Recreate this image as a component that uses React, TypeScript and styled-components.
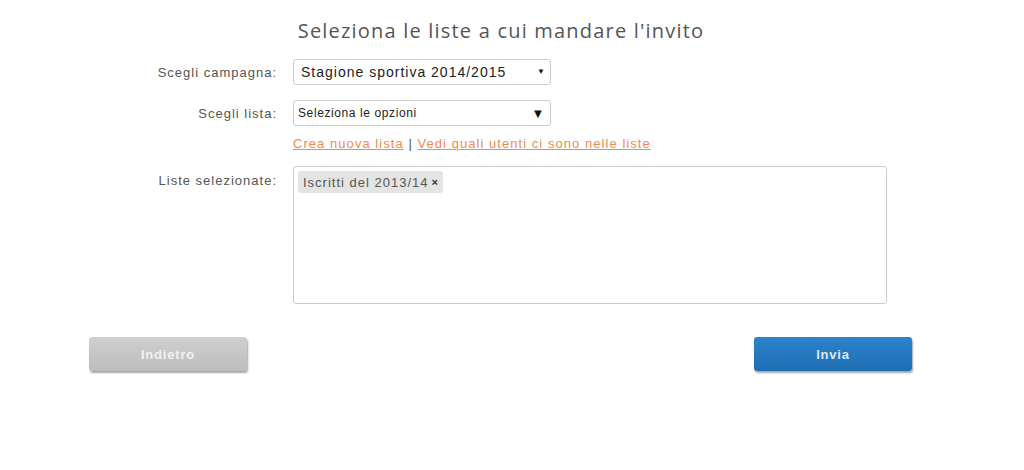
import React from "react";
import styled, { createGlobalStyle } from "styled-components";

const Global = createGlobalStyle`
  html, body { margin: 0; padding: 0; background: #fff; }
  body { font-family: "Liberation Sans", Arial, sans-serif; }
`;

const Page = styled.div`
  width: 1024px;
  height: 470px;
  box-sizing: border-box;
  padding-top: 16px;
`;

const Title = styled.h1`
  margin: 0 22px 0 0;
  text-align: center;
  font-family: "Open Sans", sans-serif;
  font-weight: 400;
  font-size: 20px;
  line-height: 30px;
  color: #555;
  letter-spacing: 1.2px;
`;

const Form = styled.div`
  display: grid;
  grid-template-columns: 277px 594px;
  column-gap: 16px;
  margin-top: 13px;
`;

const Label = styled.div<{ $top?: number }>`
  text-align: right;
  font-size: 13px;
  color: #555;
  letter-spacing: 1px;
  padding-top: ${(p) => p.$top ?? 6}px;
`;

const Cell = styled.div<{ $mb?: number }>`
  margin-bottom: ${(p) => p.$mb ?? 0}px;
`;

const Select = styled.div<{ $small?: boolean }>`
  width: 258px;
  height: 26px;
  box-sizing: border-box;
  border: 1px solid #ccc;
  border-radius: 3px;
  background: #fff;
  display: flex;
  align-items: center;
  justify-content: space-between;
  padding: 0 ${(p) => (p.$small ? 5 : 4)}px 0 ${(p) => (p.$small ? 4 : 7)}px;
  font-size: ${(p) => (p.$small ? 12 : 14)}px;
  color: #222;
  letter-spacing: ${(p) => (p.$small ? 0.6 : 1)}px;
`;

const Arrow = styled.span<{ $big?: boolean }>`
  font-size: ${(p) => (p.$big ? 13 : 8)}px;
  color: #111;
  line-height: 1;
`;

const Links = styled.div`
  font-size: 13px;
  color: #555;
  letter-spacing: 1.05px;
  padding-top: 10px;
`;

const Link = styled.a`
  color: #f0894e;
  text-decoration: underline;
  cursor: pointer;
`;

const Box = styled.div`
  width: 594px;
  height: 138px;
  box-sizing: border-box;
  border: 1px solid #ccc;
  border-radius: 3px;
  padding: 4px;
  margin-top: 15px;
`;

const Tag = styled.span`
  display: inline-flex;
  align-items: center;
  gap: 3px;
  height: 22px;
  padding: 0 4px 0 5px;
  background: #e4e4e4;
  border-radius: 3px;
  font-size: 13px;
  color: #555;
  letter-spacing: 1px;
`;

const Close = styled.span`
  font-size: 11px;
  font-weight: bold;
  color: #333;
`;

const Buttons = styled.div`
  display: flex;
  justify-content: space-between;
  padding: 0 112px 0 89px;
  margin-top: 33px;
`;

const Button = styled.button<{ $primary?: boolean }>`
  width: 158px;
  height: 34px;
  border: none;
  border-radius: 3px;
  font-family: "Liberation Sans", Arial, sans-serif;
  font-size: 13px;
  font-weight: bold;
  letter-spacing: 0.8px;
  color: ${(p) => (p.$primary ? "#dce8f4" : "#f2f2f2")};
  background: ${(p) =>
    p.$primary
      ? "linear-gradient(#2c83cc, #1f6db3)"
      : "linear-gradient(#cfcfcf, #bdbdbd)"};
  box-shadow: 1px 2px 2px rgba(0, 0, 0, 0.35);
`;

export default function App() {
  return (
    <Page>
      <Global />
      <Title>Seleziona le liste a cui mandare l'invito</Title>
      <Form>
        <Label>Scegli campagna:</Label>
        <Cell $mb={15}>
          <Select>
            <span>Stagione sportiva 2014/2015</span>
            <Arrow>▼</Arrow>
          </Select>
        </Cell>
        <Label>Scegli lista:</Label>
        <Cell>
          <Select $small>
            <span>Seleziona le opzioni</span>
            <Arrow $big>▼</Arrow>
          </Select>
          <Links>
            <Link>Crea nuova lista</Link> | <Link>Vedi quali utenti ci sono nelle liste</Link>
          </Links>
        </Cell>
        <Label $top={22}>Liste selezionate:</Label>
        <Cell>
          <Box>
            <Tag>
              Iscritti del 2013/14 <Close>×</Close>
            </Tag>
          </Box>
        </Cell>
      </Form>
      <Buttons>
        <Button>Indietro</Button>
        <Button $primary>Invia</Button>
      </Buttons>
    </Page>
  );
}
